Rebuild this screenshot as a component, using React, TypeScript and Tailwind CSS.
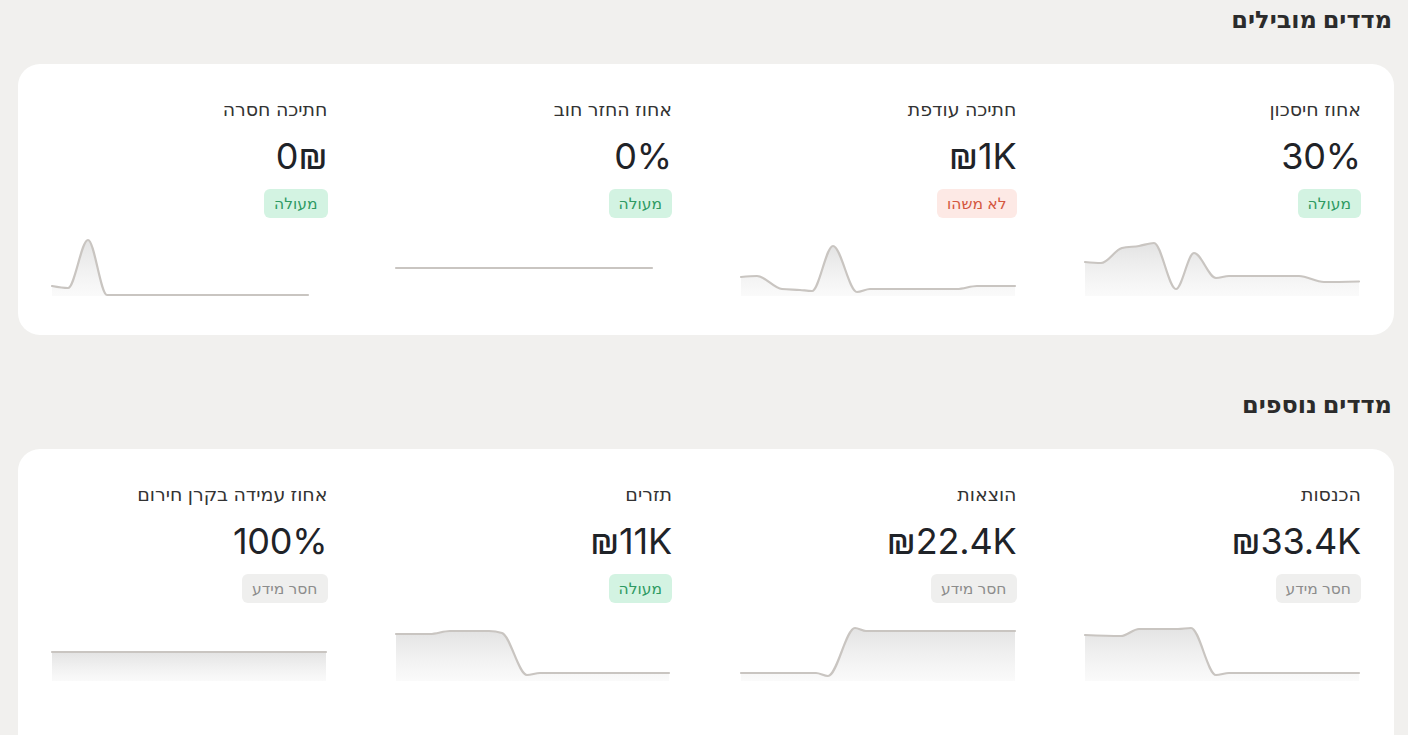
import React from "react";

type Pt = [number, number];

function sign(x: number) {
  return x < 0 ? -1 : 1;
}

function monotonePath(pts: Pt[]): string {
  const n = pts.length;
  if (n < 2) return "";
  if (n === 2) return `M${pts[0][0]},${pts[0][1]}L${pts[1][0]},${pts[1][1]}`;
  const t: number[] = new Array(n).fill(0);
  for (let i = 1; i < n - 1; i++) {
    const [x0, y0] = pts[i - 1];
    const [x1, y1] = pts[i];
    const [x2, y2] = pts[i + 1];
    const h0 = x1 - x0;
    const h1 = x2 - x1;
    const s0 = (y1 - y0) / h0;
    const s1 = (y2 - y1) / h1;
    const p = (s0 * h1 + s1 * h0) / (h0 + h1);
    t[i] = (sign(s0) + sign(s1)) * Math.min(Math.abs(s0), Math.abs(s1), 0.5 * Math.abs(p)) || 0;
  }
  {
    const h = pts[1][0] - pts[0][0];
    t[0] = (3 * (pts[1][1] - pts[0][1]) / h - t[1]) / 2;
    const hh = pts[n - 1][0] - pts[n - 2][0];
    t[n - 1] = (3 * (pts[n - 1][1] - pts[n - 2][1]) / hh - t[n - 2]) / 2;
  }
  let d = `M${pts[0][0]},${pts[0][1]}`;
  for (let i = 0; i < n - 1; i++) {
    const [x0, y0] = pts[i];
    const [x1, y1] = pts[i + 1];
    const dx = (x1 - x0) / 3;
    d += `C${x0 + dx},${y0 + dx * t[i]},${x1 - dx},${y1 - dx * t[i + 1]},${x1},${y1}`;
  }
  return d;
}

function Spark({ pts, id, fill = true }: { pts: Pt[]; id: string; fill?: boolean }) {
  const line = monotonePath(pts);
  const last = pts[pts.length - 1];
  const area = `${line}L${last[0]},60L${pts[0][0]},60Z`;
  return (
    <svg width="276" height="60" viewBox="0 0 276 60" className="block overflow-visible">
      <defs>
        <linearGradient id={id} x1="0" y1="0" x2="0" y2="1">
          <stop offset="0%" stopColor="#dedede" stopOpacity="0.85" />
          <stop offset="100%" stopColor="#f7f7f7" stopOpacity="0.6" />
        </linearGradient>
      </defs>
      {fill && <path d={area} fill={`url(#${id})`} stroke="none" />}
      <path d={line} fill="none" stroke="#c9c5c1" strokeWidth="2.2" strokeLinejoin="round" strokeLinecap="round" />
    </svg>
  );
}

type Tone = "good" | "bad" | "none";

const badgeCls: Record<Tone, string> = {
  good: "bg-[#d3f3e2] text-[#2e9a62]",
  bad: "bg-[#fde9e5] text-[#d4573f]",
  none: "bg-[#efefee] text-[#8c8c8c]",
};

type Metric = {
  title: string;
  value: string;
  badge: string;
  tone: Tone;
  pts: Pt[];
  fill?: boolean;
};

const leading: Metric[] = [
  {
    title: "אחוז חיסכון",
    value: "30%",
    badge: "מעולה",
    tone: "good",
    pts: [
      [0, 26], [16, 27], [37, 12], [54, 10], [69, 7], [91, 53], [109, 17], [131, 42], [144, 40], [214, 40], [239, 46], [274, 45.5],
    ],
  },
  {
    title: "חתיכה עודפת",
    value: "₪1K",
    badge: "לא משהו",
    tone: "bad",
    pts: [
      [0, 41], [16, 40], [41, 53], [59, 54], [71, 55], [92, 10], [116, 56], [129, 53], [216, 53], [236, 50], [274, 50],
    ],
  },
  {
    title: "אחוז החזר חוב",
    value: "0%",
    badge: "מעולה",
    tone: "good",
    pts: [
      [0, 32], [256, 32],
    ],
    fill: false,
  },
  {
    title: "חתיכה חסרה",
    value: "0₪",
    badge: "מעולה",
    tone: "good",
    pts: [
      [0, 50], [16, 52], [36, 4], [55, 59], [256, 59],
    ],
  },
];

const extra: Metric[] = [
  {
    title: "הכנסות",
    value: "₪33.4K",
    badge: "חסר מידע",
    tone: "none",
    pts: [
      [0, 14], [36, 15], [54, 8], [93, 8], [106, 7], [131, 54], [144, 52], [274, 52],
    ],
  },
  {
    title: "הוצאות",
    value: "₪22.4K",
    badge: "חסר מידע",
    tone: "none",
    pts: [
      [0, 52], [75, 52], [87, 55], [114, 7], [125, 10], [274, 10],
    ],
  },
  {
    title: "תזרים",
    value: "₪11K",
    badge: "מעולה",
    tone: "good",
    pts: [
      [0, 13], [34, 13], [54, 10], [93, 10], [106, 12], [131, 54], [144, 52], [273, 52],
    ],
  },
  {
    title: "אחוז עמידה בקרן חירום",
    value: "100%",
    badge: "חסר מידע",
    tone: "none",
    pts: [
      [0, 31], [274, 31],
    ],
  },
];

function MetricCell({ m, id }: { m: Metric; id: string }) {
  return (
    <div className="flex flex-col items-start">
      <div className="text-[19px] leading-7 text-[#333333]">{m.title}</div>
      <div
        dir="ltr"
        className="mt-[12px] w-full text-right text-[36px] leading-[40px] font-normal text-[#1f2328] tracking-[-0.2px]"
      >
        {m.value}
      </div>
      <div className={`mt-[13px] rounded-[6px] px-[10px] py-[4px] text-[15.5px] leading-[21px] ${badgeCls[m.tone]}`}>
        {m.badge}
      </div>
      <div className="mt-[18px] w-[276px]">
        <Spark pts={m.pts} id={id} fill={m.fill !== false} />
      </div>
    </div>
  );
}

function Section({ title, items, prefix, bottom }: { title: string; items: Metric[]; prefix: string; bottom: string }) {
  return (
    <section>
      <h2 className="pr-[2px] text-[24px] leading-8 font-bold text-[#2b2b2b]">{title}</h2>
      <div className={`mt-[28px] rounded-[22px] bg-white pt-[32px] px-[33px] ${bottom}`}>
        <div className="grid grid-cols-4 gap-x-[68px]">
          {items.map((m, i) => (
            <MetricCell key={i} m={m} id={`${prefix}${i}`} />
          ))}
        </div>
      </div>
    </section>
  );
}

export default function App() {
  return (
    <div
      dir="rtl"
      className="min-h-screen overflow-hidden bg-[#f1f0ee] pl-[18px] pr-[14px] pt-[4px]"
      style={{ fontFamily: '"Inter", "DejaVu Sans", sans-serif' }}
    >
      <Section title="מדדים מובילים" items={leading} prefix="a" bottom="pb-[39px]" />
      <div className="h-[54px]" />
      <Section title="מדדים נוספים" items={extra} prefix="b" bottom="pb-[90px]" />
    </div>
  );
}
